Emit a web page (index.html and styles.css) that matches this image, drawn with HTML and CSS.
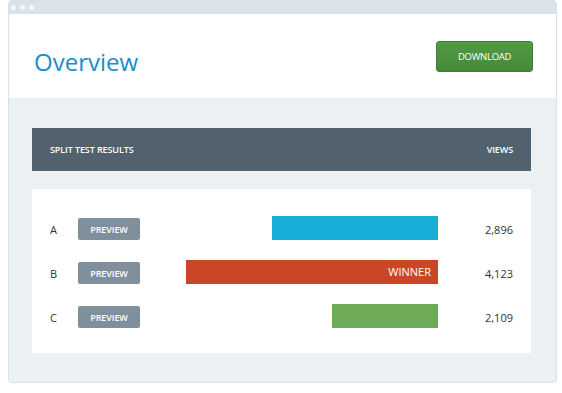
FILE: index.html
```html
<!DOCTYPE html>
<html lang="en">
<head>
    <meta charset="UTF-8">
    <meta name="viewport" content="width=device-width, initial-scale=1.0">
    <title>Overview</title>
    <link rel="stylesheet" href="styles.css">
</head>
<body>
    <div class="window">
        <div class="window-bar">
            <span class="dot"></span>
            <span class="dot"></span>
            <span class="dot"></span>
        </div>

        <div class="page-header">
            <h1>Overview</h1>
            <a href="#" class="btn-download">DOWNLOAD</a>
        </div>

        <div class="content">
            <div class="results-head">
                <span>SPLIT TEST RESULTS</span>
                <span>VIEWS</span>
            </div>

            <div class="results">
                <div class="row">
                    <span class="label">A</span>
                    <a href="#" class="btn-preview">PREVIEW</a>
                    <div class="track">
                        <div class="bar bar-blue" style="width: 166px"></div>
                    </div>
                    <span class="views">2,896</span>
                </div>
                <div class="row">
                    <span class="label">B</span>
                    <a href="#" class="btn-preview">PREVIEW</a>
                    <div class="track">
                        <div class="bar bar-red" style="width: 252px">WINNER</div>
                    </div>
                    <span class="views">4,123</span>
                </div>
                <div class="row">
                    <span class="label">C</span>
                    <a href="#" class="btn-preview">PREVIEW</a>
                    <div class="track">
                        <div class="bar bar-green" style="width: 106px"></div>
                    </div>
                    <span class="views">2,109</span>
                </div>
            </div>
        </div>
    </div>
</body>
</html>
```

FILE: styles.css
```css
body {
    margin: 0;
    font-family: "Open Sans", "Liberation Sans", sans-serif;
    background: #fff;
    color: #333;
}
.window {
    width: 547px;
    height: 381px;
    margin: 0 0 0 8px;
    border: 1px solid #d8e1e7;
    border-radius: 4px;
    background: #ebf0f3;
    overflow: hidden;
    display: flex;
    flex-direction: column;
}
.window-bar {
    height: 13px;
    background: #dae3e9;
    display: flex;
    align-items: center;
    gap: 4px;
    padding-left: 2px;
}
.dot {
    width: 5px;
    height: 5px;
    border-radius: 50%;
    background: #f5f8fa;
}
.page-header {
    height: 84px;
    background: #fff;
    display: flex;
    justify-content: space-between;
    align-items: flex-start;
    padding: 27px 23px 0 25px;
    box-sizing: border-box;
}
.page-header h1 {
    margin: 6px 0 0;
    font-size: 24px;
    line-height: 30px;
    font-weight: 400;
    color: #1a8dcb;
}
.btn-download {
    width: 97px;
    height: 31px;
    box-sizing: border-box;
    display: flex;
    align-items: center;
    justify-content: center;
    background: linear-gradient(#519a44, #468a3a);
    border: 1px solid #3f7f34;
    border-radius: 3px;
    color: #fff;
    font-size: 9.5px;
    letter-spacing: -0.3px;
    text-decoration: none;
}
.content {
    flex: 1;
    padding: 30px 25px 0 23px;
}
.results-head {
    height: 43px;
    background: #52616e;
    color: #fff;
    display: flex;
    justify-content: space-between;
    align-items: center;
    padding: 0 18px;
    font-size: 9px;
    font-weight: 600;
    letter-spacing: -0.1px;
}
.results {
    margin-top: 18px;
    background: #fff;
    padding: 18px 18px 14px;
}
.row {
    height: 44px;
    display: flex;
    align-items: center;
}
.label {
    width: 28px;
    font-size: 11px;
}
.btn-preview {
    width: 62px;
    height: 22px;
    display: flex;
    align-items: center;
    justify-content: center;
    background: #7f8f9c;
    border-radius: 2px;
    color: #fff;
    font-size: 9px;
    font-weight: 600;
    letter-spacing: -0.1px;
    text-decoration: none;
}
.track {
    flex: 1;
    display: flex;
    justify-content: flex-end;
    margin-top: -2px;
}
.bar {
    height: 24px;
    box-sizing: border-box;
    color: #fff;
    font-size: 11px;
    line-height: 24px;
    text-align: right;
    padding-right: 7px;
}
.bar-blue {
    background: #19aed8;
}
.bar-red {
    background: #c94626;
}
.bar-green {
    background: #6dab59;
}
.views {
    width: 75px;
    text-align: right;
    font-size: 11px;
}
```
